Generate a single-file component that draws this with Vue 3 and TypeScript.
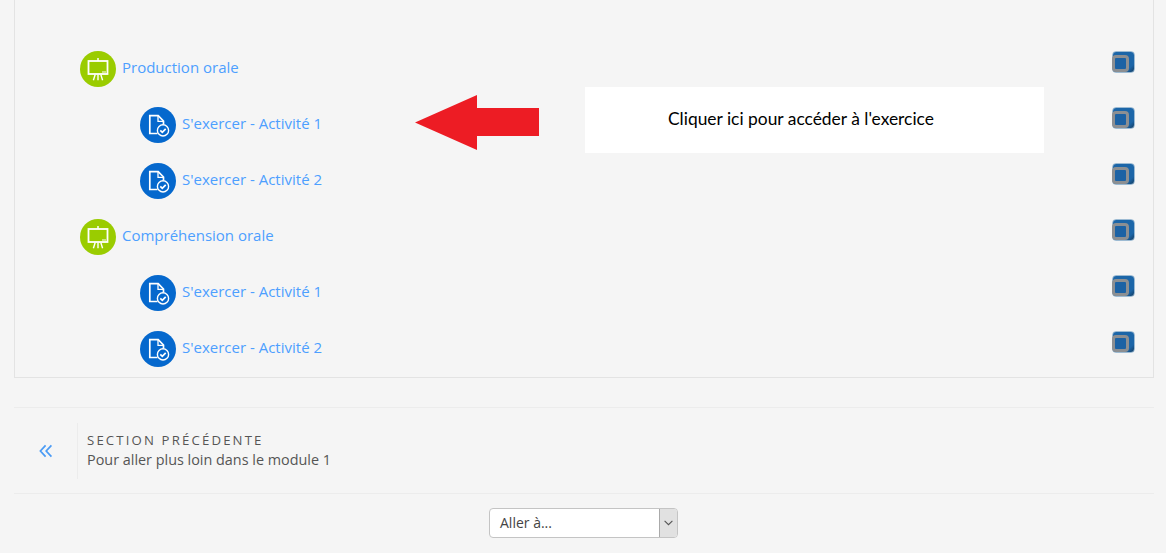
<script setup lang="ts">
type Row = { label: string; kind: 'lesson' | 'quiz' }
const rows: Row[] = [
  { label: 'Production orale', kind: 'lesson' },
  { label: "S'exercer - Activité 1", kind: 'quiz' },
  { label: "S'exercer - Activité 2", kind: 'quiz' },
  { label: 'Compréhension orale', kind: 'lesson' },
  { label: "S'exercer - Activité 1", kind: 'quiz' },
  { label: "S'exercer - Activité 2", kind: 'quiz' },
]
</script>

<template>
  <div class="page">
    <section class="box">
      <div v-for="(r, i) in rows" :key="i" class="row" :class="r.kind">
        <span class="circle">
          <svg v-if="r.kind === 'lesson'" width="36" height="36" viewBox="0 0 36 36" fill="none" stroke="#fff">
            <path d="M18 7v3" stroke-width="1.5" />
            <rect x="8.5" y="10" width="19" height="13" stroke-width="1.8" />
            <path d="M22 21h4" stroke-width="1" />
            <path d="M15.2 23.5l-1.8 5.8M18 23.5v5.8M20.8 23.5l1.8 5.8" stroke-width="1.4" />
          </svg>
          <svg v-else width="36" height="36" viewBox="0 0 36 36" fill="none" stroke="#fff">
            <path d="M17.5 26.5H9.8V8.6h8.4l5.3 5.4v3.6" stroke-width="1.7" />
            <path d="M18 9v5.3h5.2" stroke-width="1.3" />
            <circle cx="23" cy="23.4" r="5.6" stroke-width="1.4" fill="#0568cd" />
            <path d="M20.3 23.4l2 2 3.4-3.6" stroke-width="1.7" />
          </svg>
        </span>
        <a class="link">{{ r.label }}</a>
        <span class="check"><span class="inner"></span></span>
      </div>

      <svg class="arrow" width="124" height="56" viewBox="0 0 124 56">
        <polygon points="0,27.5 62,0 62,13 124,13 124,41 62,41 62,55" fill="#ed1c24" />
      </svg>
      <div class="note">Cliquer ici pour accéder à l'exercice</div>
    </section>

    <nav class="section-nav">
      <span class="chev">
        <svg width="14" height="14" viewBox="0 0 14 14" fill="none" stroke="#4a9bf5" stroke-width="1.7">
          <path d="M6.6 1.4L1.4 7l5.2 5.6M12.4 1.4L7.2 7l5.2 5.6" />
        </svg>
      </span>
      <div class="nav-text">
        <div class="nav-title">SECTION PRÉCÉDENTE</div>
        <div class="nav-sub">Pour aller plus loin dans le module 1</div>
      </div>
    </nav>

    <div class="jump">
      <div class="select">
        <span class="select-label">Aller à...</span>
        <span class="select-btn">
          <svg width="9" height="6" viewBox="0 0 9 6" fill="none" stroke="#555" stroke-width="1.1">
            <path d="M.6 .8l3.9 3.9L8.4 .8" />
          </svg>
        </span>
      </div>
    </div>
  </div>
</template>

<style>
html, body { margin: 0; background: #f5f5f5; }
</style>

<style scoped>
.page {
  height: 553px;
  overflow: hidden;
  background: #f5f5f5;
  padding: 0 12px 0 14px;
  font-family: "Open Sans", sans-serif;
}
.box {
  position: relative;
  height: 378px;
  box-sizing: border-box;
  padding-top: 41px;
  border: 1px solid #e3e3e3;
  border-top: 0;
}
.row {
  height: 56px;
  display: flex;
  align-items: center;
  padding-right: 18px;
}
.row.lesson { padding-left: 65px; }
.row.quiz { padding-left: 125px; }
.circle {
  width: 36px;
  height: 36px;
  border-radius: 50%;
  flex: none;
  margin-right: 6px;
}
.circle svg { display: block; }
.lesson .circle { background: #9acc00; }
.quiz .circle { background: #0568cd; }
.link {
  flex: 1;
  margin-top: -5px;
  color: #4d9fff;
  font-size: 15px;
  line-height: 20px;
}
.check {
  width: 23px;
  height: 22px;
  box-sizing: border-box;
  margin-top: -15px;
  border-radius: 4px;
  background: linear-gradient(135deg, #1c66a8 80%, #123a5e 100%);
  border: 1px solid #9dbbd3;
  padding: 3px 0 0 0;
  flex: none;
}
.inner {
  display: block;
  width: 17px;
  height: 17px;
  margin-left: -1px;
  box-sizing: border-box;
  border: 3px solid #8c8f92;
  border-radius: 4px;
  background: #1c62a4;
}
.arrow {
  position: absolute;
  left: 400px;
  top: 95px;
}
.note {
  position: absolute;
  left: 570px;
  top: 87px;
  width: 459px;
  height: 66px;
  box-sizing: border-box;
  background: #fff;
  padding: 20px 0 0 83px;
  font-family: Lato, sans-serif;
  font-size: 17.4px;
  line-height: 24px;
  color: #000;
}
.section-nav {
  margin-top: 29px;
  height: 87px;
  box-sizing: border-box;
  border-top: 1px solid #ececec;
  border-bottom: 1px solid #ececec;
  display: flex;
  align-items: center;
}
.chev {
  width: 64px;
  height: 56px;
  box-sizing: border-box;
  border-right: 1px solid #ececec;
  display: flex;
  align-items: center;
  justify-content: center;
}
.nav-text {
  padding-left: 9px;
  padding-bottom: 1px;
  color: #555;
}
.nav-title {
  font-size: 13.2px;
  line-height: 19px;
  letter-spacing: 2.15px;
}
.nav-sub {
  font-size: 14.4px;
  line-height: 19px;
}
.jump {
  margin-top: 14px;
  display: flex;
  justify-content: center;
}
.select {
  width: 189px;
  height: 30px;
  box-sizing: border-box;
  margin-left: -1px;
  border: 1px solid #c4c4c4;
  border-radius: 4px;
  background: #fff;
  display: flex;
  overflow: hidden;
}
.select-label {
  flex: 1;
  padding-left: 10px;
  font-size: 14px;
  line-height: 28px;
  color: #444;
}
.select-btn {
  width: 17px;
  background: #e1e1e1;
  border-left: 1px solid #aaa;
  display: flex;
  align-items: center;
  justify-content: center;
}
</style>
